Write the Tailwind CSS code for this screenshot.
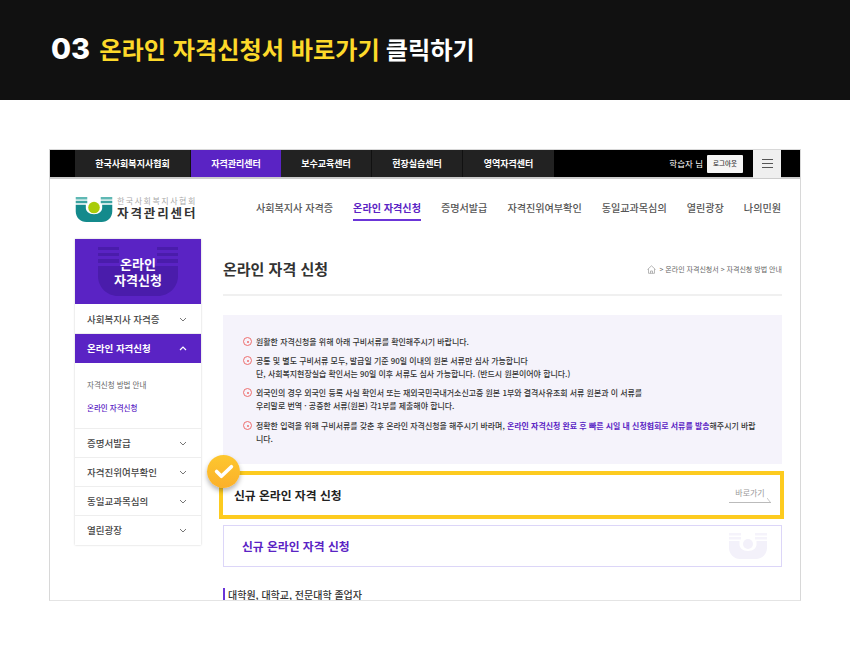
<!DOCTYPE html>
<html lang="ko">
<head>
<meta charset="UTF-8">
<title>온라인 자격신청서 바로가기</title>
<script src="https://cdn.jsdelivr.net/npm/@tailwindcss/browser@4"></script>
</head>
<body class="w-[850px] h-[650px] overflow-hidden bg-white font-['Noto_Sans_CJK_KR',sans-serif] text-[#333]">
  <!-- step title -->
  <div class="h-[100px] bg-[#111] flex items-center pl-[51px] text-[24.200px] font-bold text-white pb-[2px]">
    <span class="font-['Inter',sans-serif] text-[29px] font-extrabold mr-[9px]">03</span>
    <span class="text-[#fdd92a]">온라인 자격신청서 바로가기</span>
    <span class="ml-[6px]">클릭하기</span>
  </div>

  <!-- captured page -->
  <div class="ml-[49px] mt-[49px] w-[752px] h-[452px] border border-[#d8d8d8] border-b-[#e4e4e4] overflow-hidden">
    <div class="h-[29px] bg-black border-b-2 border-[#ccc] flex pl-[25px] text-[9px] font-bold text-white">
      <div class="w-[116px] bg-[#222] flex items-center justify-center border-r border-[#111]">한국사회복지사협회</div>
      <div class="w-[90px] bg-[#5a23c4] flex items-center justify-center">자격관리센터</div>
      <div class="w-[91px] bg-[#222] flex items-center justify-center border-r border-[#111]">보수교육센터</div>
      <div class="w-[91px] bg-[#222] flex items-center justify-center border-r border-[#111]">현장실습센터</div>
      <div class="w-[91px] bg-[#222] flex items-center justify-center">영역자격센터</div>
      <div class="ml-auto flex items-center font-normal mr-[19px]">
        <span class="text-[8.500px] mr-[4px]">학습자 님</span>
        <span class="w-[36px] h-[18px] bg-[#f5f5f5] text-[#333] text-[6.500px] font-medium flex items-center justify-center rounded-[1px]">로그아웃</span>
        <span class="w-[28px] h-[28px] ml-[10px] bg-[#efefef] flex items-center justify-center">
          <svg width="11" height="9" viewBox="0 0 11 9" fill="none" stroke="#555" stroke-width="1"><path d="M0 .5h11M0 4.500h11M0 8.500h11"/></svg>
        </span>
      </div>
    </div>

    <div class="h-[60px] pl-[25px] pr-[19px] flex items-start">
      <div class="flex items-center mt-[17px]">
        <svg width="38" height="25" viewBox="0 0 38 26">
          <path d="M0 0h12v2.500H0zM26 0h12v2.500H26z" fill="#5fb8b4"/>
          <path d="M0 4h12v2.500H0zM26 4h12v2.500H26z" fill="#3ba3a1"/>
          <path d="M0 8h10.500v3.500c0 3 3 6.500 8.500 6.500s8.500-3.500 8.500-6.500V8H38v7c0 6-5 11-11 11H11C5 26 0 21 0 15z" fill="#148a8c"/>
          <circle cx="19" cy="11" r="6" fill="#a9cc0a"/>
        </svg>
        <div class="ml-[4px] mb-[3px]">
          <div class="text-[8px] text-[#aaa] tracking-[1.500px] leading-[10px]">한국사회복지사협회</div>
          <div class="text-[12.500px] font-bold text-[#333] tracking-[1.900px] leading-[14px]">자격관리센터</div>
        </div>
      </div>
      <nav class="ml-auto flex gap-[20px] text-[10.100px] text-[#555] font-medium mt-[21px]">
        <span class="h-[21px]">사회복지사 자격증</span>
        <span class="h-[21px] text-[#5a23c4] font-bold border-b-2 border-[#6b35d8]">온라인 자격신청</span>
        <span class="h-[21px]">증명서발급</span>
        <span class="h-[21px]">자격진위여부확인</span>
        <span class="h-[21px]">동일교과목심의</span>
        <span class="h-[21px]">열린광장</span>
        <span class="h-[21px]">나의민원</span>
      </nav>
    </div>

    <div class="flex pl-[25px] pr-[18px]">
      <!-- side menu -->
      <aside class="w-[126px] h-[306px] shrink-0 shadow-[0_0_2px_rgba(0,0,0,0.2)]">
        <div class="relative h-[65px] bg-[#5a23c4] flex items-center justify-center text-center text-white text-[13px] font-bold leading-[16px] overflow-hidden">
          <svg class="absolute left-[23px] top-[8px]" width="80" height="49" viewBox="0 0 80 49">
            <path d="M0 0h21v3H0zM59 0h21v3H59zM0 6h21v3H0zM59 6h21v3H59zM0 12h21v4H0zM59 12h21v4H59zM0 19h80v10c0 11-9 20-20 20H20C9 49 0 40 0 29z" fill="#4a1cab"/>
          </svg>
          <span class="relative">온라인<br>자격신청</span>
        </div>
        <div class="h-[30px] pl-[12px] pr-[14px] pt-[2px] flex items-center justify-between text-[9.500px] font-medium text-[#444] border-b border-[#eee]">사회복지사 자격증
          <svg width="8" height="5" viewBox="0 0 8 5" fill="none" stroke="#777" stroke-width="1"><path d="M1 1l3 3 3-3"/></svg>
        </div>
        <div class="h-[29px] pl-[12px] pr-[14px] flex items-center justify-between text-[9.500px] font-bold text-white bg-[#5a23c4]">온라인 자격신청
          <svg width="8" height="5" viewBox="0 0 8 5" fill="none" stroke="#fff" stroke-width="1.200"><path d="M1 4l3-3 3 3"/></svg>
        </div>
        <div class="h-[66px] pl-[12px] pt-[16px] text-[7.500px] border-b border-[#eee]">
          <div class="text-[#666] leading-[12px]">자격신청 방법 안내</div>
          <div class="text-[#5a23c4] font-medium leading-[12px] mt-[11px]">온라인 자격신청</div>
        </div>
        <div class="h-[29px] pl-[12px] pr-[14px] flex items-center justify-between text-[9.500px] font-medium text-[#444] border-b border-[#eee]">증명서발급
          <svg width="8" height="5" viewBox="0 0 8 5" fill="none" stroke="#777" stroke-width="1"><path d="M1 1l3 3 3-3"/></svg>
        </div>
        <div class="h-[29px] pl-[12px] pr-[14px] flex items-center justify-between text-[9.500px] font-medium text-[#444] border-b border-[#eee]">자격진위여부확인
          <svg width="8" height="5" viewBox="0 0 8 5" fill="none" stroke="#777" stroke-width="1"><path d="M1 1l3 3 3-3"/></svg>
        </div>
        <div class="h-[29px] pl-[12px] pr-[14px] flex items-center justify-between text-[9.500px] font-medium text-[#444] border-b border-[#eee]">동일교과목심의
          <svg width="8" height="5" viewBox="0 0 8 5" fill="none" stroke="#777" stroke-width="1"><path d="M1 1l3 3 3-3"/></svg>
        </div>
        <div class="h-[29px] pl-[12px] pr-[14px] flex items-center justify-between text-[9.500px] font-medium text-[#444]">열린광장
          <svg width="8" height="5" viewBox="0 0 8 5" fill="none" stroke="#777" stroke-width="1"><path d="M1 1l3 3 3-3"/></svg>
        </div>
      </aside>

      <main class="ml-[22px] w-[559px]">
        <div class="h-[57px] flex items-center justify-between border-b-2 border-[#f0f0f0] pt-[6px]">
          <h2 class="text-[15px] font-bold text-[#333]">온라인 자격 신청</h2>
          <div class="flex items-center text-[7px] text-[#666] gap-[3px]">
            <svg width="9" height="9" viewBox="0 0 9 9" fill="none" stroke="#999" stroke-width="0.700"><path d="M.5 4.500L4.500.8l4 3.700M1.500 4v4.300h6V4M3.500 8.300V6h2v2.300"/></svg>
            <span>&gt; 온라인 자격신청서 &gt; 자격신청 방법 안내</span>
          </div>
        </div>

        <div class="mt-[19px] h-[149px] bg-[#f5f3fb] pl-[20px] pr-[20px] pt-[20px] text-[7.950px] leading-[13px] font-medium text-[#333] flex flex-col gap-[6px]">
          <div class="flex"><span class="w-[9px] h-[9px] mt-[2px] mr-[4px] shrink-0 rounded-full border border-[#ee6e6e] flex items-center justify-center"><span class="w-[2px] h-[2px] rounded-full bg-[#ee6e6e]"></span></span><p>원활한 자격신청을 위해 아래 구비서류를 확인해주시기 바랍니다.</p></div>
          <div class="flex"><span class="w-[9px] h-[9px] mt-[2px] mr-[4px] shrink-0 rounded-full border border-[#ee6e6e] flex items-center justify-center"><span class="w-[2px] h-[2px] rounded-full bg-[#ee6e6e]"></span></span><p>공통 및 별도 구비서류 모두, 발급일 기준 90일 이내의 원본 서류만 심사 가능합니다<br>단, 사회복지현장실습 확인서는 90일 이후 서류도 심사 가능합니다. (반드시 원본이어야 합니다.)</p></div>
          <div class="flex"><span class="w-[9px] h-[9px] mt-[2px] mr-[4px] shrink-0 rounded-full border border-[#ee6e6e] flex items-center justify-center"><span class="w-[2px] h-[2px] rounded-full bg-[#ee6e6e]"></span></span><p>외국인의 경우 외국인 등록 사실 확인서 또는 재외국민국내거소신고증 원본 1부와 결격사유조회 서류 원본과 이 서류를<br>우리말로 번역 · 공증한 서류(원본) 각1부를 제출해야 합니다.</p></div>
          <div class="flex mt-[1px]"><span class="w-[9px] h-[9px] mt-[2px] mr-[4px] shrink-0 rounded-full border border-[#ee6e6e] flex items-center justify-center"><span class="w-[2px] h-[2px] rounded-full bg-[#ee6e6e]"></span></span><p class="break-all">정확한 입력을 위해 구비서류를 갖춘 후 온라인 자격신청을 해주시기 바라며, <b class="text-[#5a23c4] font-bold">온라인 자격신청 완료 후 빠른 시일 내 신청협회로 서류를 발송</b>해주시기 바랍니다.</p></div>
        </div>

        <!-- highlighted row -->
        <div class="relative mt-[7px] ml-[-4px] mr-[-2px] h-[48px] border-[4px] border-[#fdcb1f] pl-[11px] pr-[9px] flex items-center justify-between">
          <span class="text-[11.800px] font-bold text-[#222]">신규 온라인 자격 신청</span>
          <span class="w-[42px] h-[15px] text-[8px] text-[#999] text-center leading-[10px] border-b border-[#bbb] relative">바로가기
            <svg class="absolute right-0 bottom-[-1px]" width="4" height="5" viewBox="0 0 4 5" fill="none" stroke="#bbb" stroke-width="0.800"><path d="M0 0l3.500 4.500"/></svg>
          </span>
          <span class="absolute left-[-16px] top-[-20px] w-[33px] h-[33px] rounded-full bg-linear-to-b from-[#fdc72f] to-[#fbb02a] shadow-[0_3px_5px_rgba(0,0,0,0.3)] flex items-center justify-center">
            <svg width="20" height="15" viewBox="0 0 19 14" fill="none" stroke="#fff" stroke-width="3.500" stroke-linecap="round" stroke-linejoin="round"><path d="M2.500 7l4.500 4.500L16.500 2.500"/></svg>
          </span>
        </div>

        <div class="relative mt-[6px] h-[42px] border border-[#dcd6f8] pl-[18px] flex items-center overflow-hidden">
          <span class="text-[11.800px] font-bold text-[#5a23c4]">신규 온라인 자격 신청</span>
          <svg class="absolute right-[12px] top-[7px]" width="42" height="26" viewBox="0 0 38 26">
            <path d="M0 0h12v2.500H0zM26 0h12v2.500H26zM0 4h12v2.500H0zM26 4h12v2.500H26z" fill="#f5f3fb"/>
            <path d="M0 8h10.500v3.500c0 3 3 6.500 8.500 6.500s8.500-3.500 8.500-6.500V8H38v7c0 6-5 11-11 11H11C5 26 0 21 0 15z" fill="#f3f1fa"/>
            <circle cx="19" cy="11" r="5" fill="#f3f1fa"/>
          </svg>
        </div>

        <div class="mt-[21px] border-l-2 border-[#6b35d8] pl-[3px] text-[10px] font-medium leading-[14px] text-[#333]">대학원, 대학교, 전문대학 졸업자</div>
      </main>
    </div>
  </div>
</body>
</html>
